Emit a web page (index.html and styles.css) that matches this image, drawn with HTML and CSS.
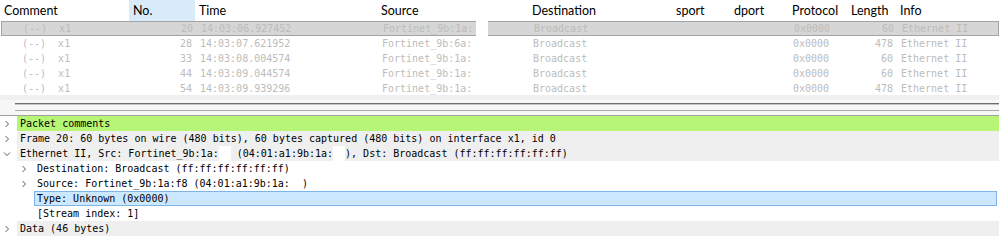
FILE: index.html
```html
<!DOCTYPE html>
<html>
<head>
<meta charset="utf-8">
<link rel="stylesheet" href="styles.css">
</head>
<body>
<div class="app">
  <div class="list">
    <div class="grid hdr">
      <div class="h">Comment</div>
      <div class="h sorted">No.</div>
      <div class="h">Time</div>
      <div class="h">Source</div>
      <div class="h">Destination</div>
      <div class="h">sport</div>
      <div class="h">dport</div>
      <div class="h">Protocol</div>
      <div class="h">Length</div>
      <div class="h">Info</div>
    </div>
    <div class="grid row sel">
      <div class="c">(--)  x1</div><div class="c r">20</div><div class="c">14:03:06.927452</div>
      <div class="c">Fortinet_9b:1a:<span class="redact wide"></span></div><div class="c">Broadcast</div>
      <div class="c"></div><div class="c"></div><div class="c">0x0000</div><div class="c r">60</div><div class="c">Ethernet II</div>
    </div>
    <div class="grid row">
      <div class="c">(--)  x1</div><div class="c r">28</div><div class="c">14:03:07.621952</div>
      <div class="c">Fortinet_9b:6a:</div><div class="c">Broadcast</div>
      <div class="c"></div><div class="c"></div><div class="c">0x0000</div><div class="c r">478</div><div class="c">Ethernet II</div>
    </div>
    <div class="grid row">
      <div class="c">(--)  x1</div><div class="c r">33</div><div class="c">14:03:08.004574</div>
      <div class="c">Fortinet_9b:1a:</div><div class="c">Broadcast</div>
      <div class="c"></div><div class="c"></div><div class="c">0x0000</div><div class="c r">60</div><div class="c">Ethernet II</div>
    </div>
    <div class="grid row">
      <div class="c">(--)  x1</div><div class="c r">44</div><div class="c">14:03:09.044574</div>
      <div class="c">Fortinet_9b:1a:</div><div class="c">Broadcast</div>
      <div class="c"></div><div class="c"></div><div class="c">0x0000</div><div class="c r">60</div><div class="c">Ethernet II</div>
    </div>
    <div class="grid row">
      <div class="c">(--)  x1</div><div class="c r">54</div><div class="c">14:03:09.939296</div>
      <div class="c">Fortinet_9b:1a:</div><div class="c">Broadcast</div>
      <div class="c"></div><div class="c"></div><div class="c">0x0000</div><div class="c r">478</div><div class="c">Ethernet II</div>
    </div>
  </div>
  <div class="hscroll"></div>
  <div class="splitter">
    <div class="sl1"></div>
    <div class="sl2"></div>
  </div>
  <div class="tree">
    <div class="trow">
      <span class="tw"><svg width="8" height="8" viewBox="0 0 8 8"><polyline points="2.5,1 5.5,4 2.5,7" class="chev"/></svg></span>
      <span class="tc green">Packet comments</span>
    </div>
    <div class="trow">
      <span class="tw"><svg width="8" height="8" viewBox="0 0 8 8"><polyline points="2.5,1 5.5,4 2.5,7" class="chev"/></svg></span>
      <span class="tc gray">Frame 20: 60 bytes on wire (480 bits), 60 bytes captured (480 bits) on interface x1, id 0</span>
    </div>
    <div class="trow">
      <span class="tw"><svg width="8" height="8" viewBox="0 0 8 8"><polyline points="1,2.5 4,5.5 7,2.5" class="chev"/></svg></span>
      <span class="tc gray">Ethernet II, Src: Fortinet_9b:1a:<span class="redact"></span> (04:01:a1:9b:1a:<span class="redact"></span>), Dst: Broadcast (ff:ff:ff:ff:ff:ff)</span>
    </div>
    <div class="trow l1">
      <span class="tw"><svg width="8" height="8" viewBox="0 0 8 8"><polyline points="2.5,1 5.5,4 2.5,7" class="chev"/></svg></span>
      <span class="tc">Destination: Broadcast (ff:ff:ff:ff:ff:ff)</span>
    </div>
    <div class="trow l1">
      <span class="tw"><svg width="8" height="8" viewBox="0 0 8 8"><polyline points="2.5,1 5.5,4 2.5,7" class="chev"/></svg></span>
      <span class="tc">Source: Fortinet_9b:1a:f8 (04:01:a1:9b:1a:  )</span>
    </div>
    <div class="trow l1">
      <span class="tw"></span>
      <span class="tc selb">Type: Unknown (0x0000)</span>
    </div>
    <div class="trow l1">
      <span class="tw"></span>
      <span class="tc">[Stream index: 1]</span>
    </div>
    <div class="trow">
      <span class="tw"><svg width="8" height="8" viewBox="0 0 8 8"><polyline points="2.5,1 5.5,4 2.5,7" class="chev"/></svg></span>
      <span class="tc gray">Data (46 bytes)</span>
    </div>
  </div>
</div>
</body>
</html>
```

FILE: styles.css
```css
* { box-sizing: border-box; }
html, body { margin: 0; padding: 0; background: #fff; }
.app { width: 999px; height: 247px; overflow: hidden; }

.list { height: 95px; background: #fff; }
.grid {
  display: grid;
  grid-template-columns: 129px 66px 182px 151px 144px 58px 58px 59px 49px 1fr;
}
.hdr { height: 21px; }
.h {
  font-family: Lato, "Liberation Sans", sans-serif;
  font-size: 12.5px;
  color: #000;
  line-height: 21px;
  padding-left: 4px;
  white-space: nowrap;
  overflow: hidden;
}
.h.sorted { background: #d9ebf9; }

.row { height: 15px; }
.c {
  font-family: "DejaVu Sans Mono", "Liberation Mono", monospace;
  font-size: 10px;
  line-height: 15px;
  height: 15px;
  color: #bcbcbc;
  padding-left: 5px;
  white-space: pre;
  overflow: hidden;
}
.c:first-child { padding-left: 22px; }
.c.r { text-align: right; padding-left: 0; padding-right: 3px; }
.sel { background: #d6d6d6; box-shadow: inset 0 0 0 1px #a4a4a4; margin-left: 1px; }

.redact {
  display: inline-block;
  width: 12px;
  height: 15px;
  background: #fff;
  vertical-align: top;
}
.redact.wide { margin-left: 3px; }

.hscroll { height: 5px; background: #f0f0f0; }
.splitter {
  height: 16px;
  background: #f7f7f7;
  padding-top: 3px;
  padding-left: 15px;
  border-bottom: 1px solid #a0a0a0;
}
.sl1 { height: 2px; border-top: 1px solid #6f6f6f; border-bottom: 1px solid #c4c4c4; }
.sl2 { height: 1px; background: #a9a9a9; margin-top: 5px; }

.tree { background: #fff; }
.trow { display: flex; height: 15px; }
.trow.l1 { padding-left: 17px; }
.tw {
  width: 17px;
  flex: none;
  display: flex;
  align-items: center;
  padding-left: 3px;
}
.chev { fill: none; stroke: #5c5c5c; stroke-width: 1; }
.tc {
  flex: 1;
  font-family: "DejaVu Sans Mono", "Liberation Mono", monospace;
  font-size: 10px;
  line-height: 15px;
  color: #000;
  padding-left: 3px;
  white-space: pre;
}
.tc.green { background: #b6f575; }
.tc.gray { background: #efefef; }
.tc.selb { background: #cce8ff; box-shadow: inset 0 0 0 1px #7fb5e6; margin-right: 2px; }
```
